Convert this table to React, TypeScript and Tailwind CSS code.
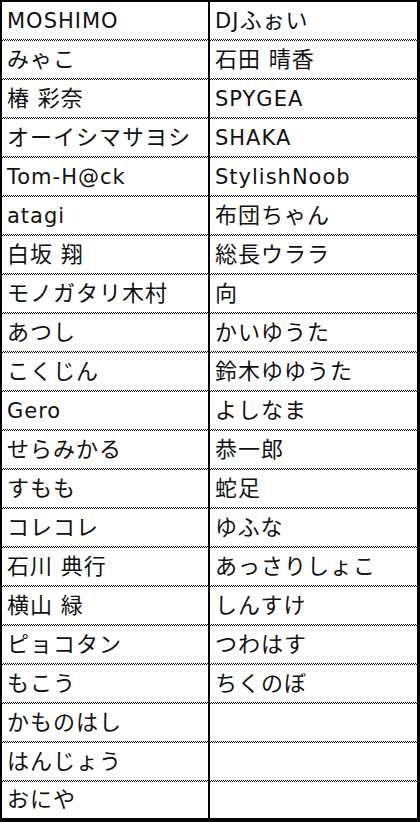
import React from "react";

const rows: [string, string][] = [
  ["MOSHIMO", "DJふぉい"],
  ["みゃこ", "石田 晴香"],
  ["椿 彩奈", "SPYGEA"],
  ["オーイシマサヨシ", "SHAKA"],
  ["Tom-H@ck", "StylishNoob"],
  ["atagi", "布団ちゃん"],
  ["白坂 翔", "総長ウララ"],
  ["モノガタリ木村", "向"],
  ["あつし", "かいゆうた"],
  ["こくじん", "鈴木ゆゆうた"],
  ["Gero", "よしなま"],
  ["せらみかる", "恭一郎"],
  ["すもも", "蛇足"],
  ["コレコレ", "ゆふな"],
  ["石川 典行", "あっさりしょこ"],
  ["横山 緑", "しんすけ"],
  ["ピョコタン", "つわはす"],
  ["もこう", "ちくのぼ"],
  ["かものはし", ""],
  ["はんじょう", ""],
  ["おにや", ""],
];

function Txt({ s }: { s: string }) {
  const parts = s.split(/([\u3000-\u9fff\uff00-\uffef]+)/).filter((p) => p !== "");
  return (
    <span className="block whitespace-pre font-['DejaVu_Sans',sans-serif] text-[21px] leading-[36px] tracking-[1px]">
      {parts.map((p, i) =>
        /[\u3000-\u9fff\uff00-\uffef]/.test(p) ? (
          <span key={i} className="font-['Noto_Sans_CJK_JP',sans-serif] text-[22px] leading-none">
            {p}
          </span>
        ) : (
          <span key={i}>{p}</span>
        )
      )}
      {s === "" ? "\u00a0" : null}
    </span>
  );
}

function Sep() {
  return (
    <div className="flex h-[2px] shrink-0">
      <div className="w-[206px] shrink-0 bg-[conic-gradient(#111_0_25%,transparent_0_50%,#111_0_75%,transparent_0)] bg-[length:2px_2px]" />
      <div className="w-[2px] shrink-0 bg-black" />
      <div className="flex-1 bg-[conic-gradient(#111_0_25%,transparent_0_50%,#111_0_75%,transparent_0)] bg-[length:2px_2px]" />
    </div>
  );
}

export default function App() {
  return (
    <div className="w-[420px] h-[822px] bg-white border-black border-t-2 border-l-2 border-r-[3px] border-b-4 flex flex-col text-[#111]">
      {rows.map(([a, b], i) => {
        const last = i === rows.length - 1;
        return (
          <React.Fragment key={i}>
            <div className={"flex shrink-0 " + (last ? "h-[36px]" : "h-[37px]")}>
              <div className="w-[208px] shrink-0 border-r-2 border-black pl-[5px] flex items-center">
                <Txt s={a} />
              </div>
              <div className="flex-1 pl-[5px] flex items-center">
                <Txt s={b} />
              </div>
            </div>
            {!last && <Sep />}
          </React.Fragment>
        );
      })}
    </div>
  );
}
